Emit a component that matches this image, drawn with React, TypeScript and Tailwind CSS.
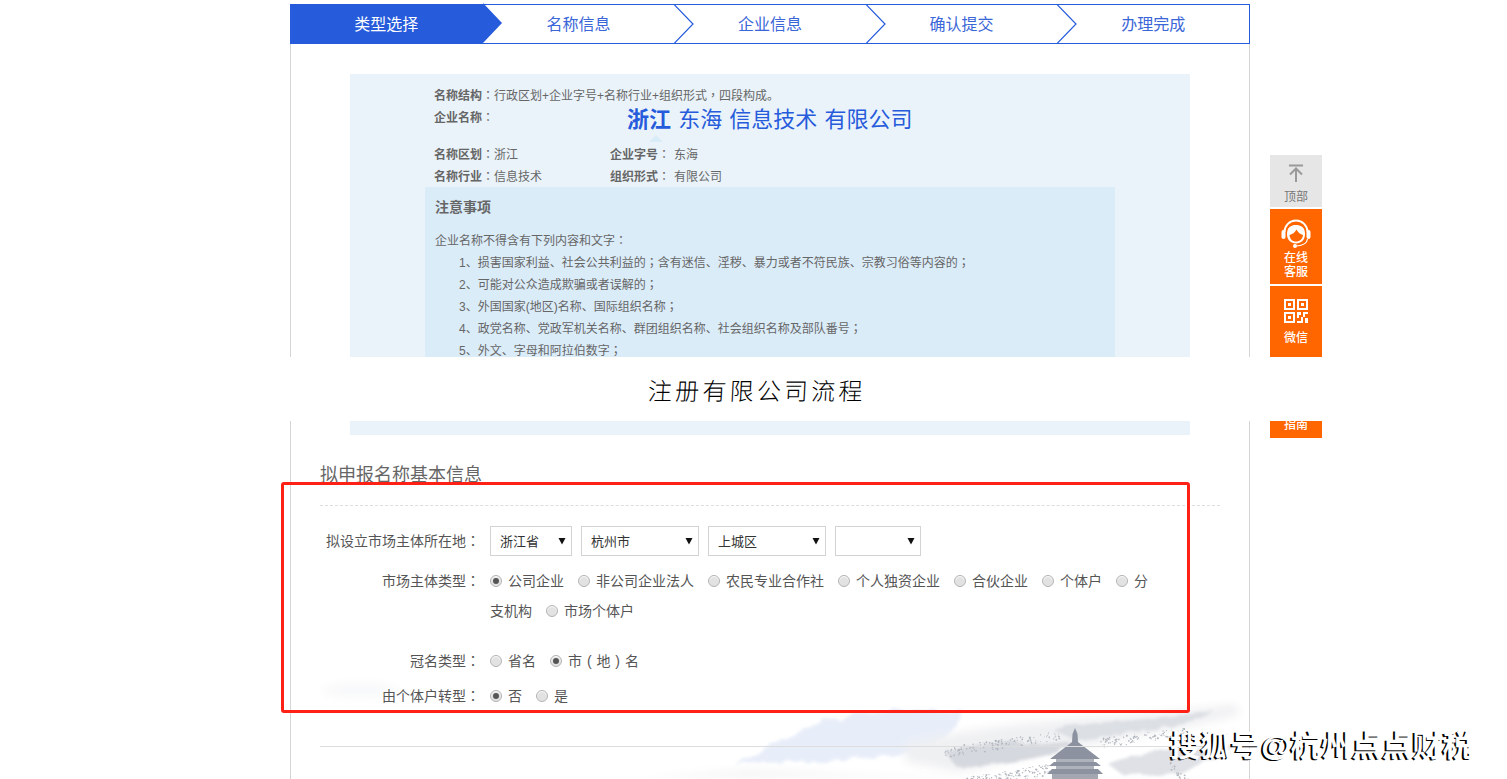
import React from 'react';

const steps = ['类型选择', '名称信息', '企业信息', '确认提交', '办理完成'];

const notes = [
  '1、损害国家利益、社会公共利益的；含有迷信、淫秽、暴力或者不符民族、宗教习俗等内容的；',
  '2、可能对公众造成欺骗或者误解的；',
  '3、外国国家(地区)名称、国际组织名称；',
  '4、政党名称、党政军机关名称、群团组织名称、社会组织名称及部队番号；',
  '5、外文、字母和阿拉伯数字；',
  '6、其他法律、行政法规规定禁止的内容和文字；',
  '7、其他有害内容和文字；',
];

// the reference centres these marks in their cell, the TC font does too
function Marks({ text }: { text: string }) {
  return (
    <>
      {text.split(/([：；，])/).map((part, i) =>
        i % 2 ? (
          <span key={i} className="font-['Noto_Sans_CJK_TC'] leading-none">
            {part}
          </span>
        ) : (
          part
        ),
      )}
    </>
  );
}

function StepBar() {
  return (
    <div className="flex h-10 border border-[#265bdb]">
      {steps.map((step, i) => (
        <div
          key={step}
          className={`relative flex w-[192px] items-center justify-center pt-px text-base ${
            i === 0 ? 'bg-[#265bdb] text-white' : 'text-[#3a66d8]'
          } ${i === 0 ? '-ml-px -my-px w-[193px]' : ''}`}
        >
          {step}
          {i < 4 && (
            <svg className="absolute -right-5 -top-px z-10 h-10 w-5" viewBox="0 0 20 40">
              {i === 0 ? (
                <path d="M0 0L19 20L0 40Z" fill="#265bdb" />
              ) : (
                <>
                  <path d="M0 0.5L19 20L0 39.5Z" fill="#fff" />
                  <path d="M0 0.5L19 20L0 39.5" fill="none" stroke="#265bdb" strokeWidth="1.2" />
                </>
              )}
            </svg>
          )}
        </div>
      ))}
    </div>
  );
}

function NamePanel() {
  return (
    <div className="mx-[30px] h-[361px] overflow-hidden bg-[#eaf3fa] px-[75px] pt-[10px] text-xs leading-[24px] text-[#666]">
      <div className="h-[22px] pl-[9px]">
        <b>名称结构</b>
        <Marks text="：行政区划+企业字号+名称行业+组织形式，四段构成。" />
      </div>
      <div className="flex h-[37px] pl-[9px]">
        <div>
          <b>企业名称</b>
          <Marks text="：" />
        </div>
        <div className="ml-[133px]">
          <div className="whitespace-nowrap text-[22px] leading-[28px] text-[#265bdb] [word-spacing:1px]">
            <b>浙江</b> 东海 信息技术 有限公司
          </div>
          <div className="ml-[22px] mt-px h-0 w-0 border-x-[7px] border-b-[7px] border-x-transparent border-b-[#dbecf9]" />
        </div>
      </div>
      <div className="grid grid-cols-[176px_1fr] grid-rows-[22px_22px] pl-[9px]">
        <div>
          <b>名称区划</b>
          <Marks text="：" />
          浙江
        </div>
        <div>
          <b>企业字号</b>
          <Marks text="：" />
          <span className="ml-1">东海</span>
        </div>
        <div>
          <b>名称行业</b>
          <Marks text="：" />
          信息技术
        </div>
        <div>
          <b>组织形式</b>
          <Marks text="：" />
          <span className="ml-1">有限公司</span>
        </div>
      </div>
      <div className="bg-[#dbecf9] px-[10px] pt-[10px]">
        <div className="h-[22px] text-sm font-bold text-[#666]">注意事项</div>
        <div className="mt-[10px] h-[22px]">
          <Marks text="企业名称不得含有下列内容和文字：" />
        </div>
        {notes.map((n) => (
          <div key={n} className="h-[22px] pl-6">
            <Marks text={n} />
          </div>
        ))}
      </div>
    </div>
  );
}

function Select({ value, width }: { value: string; width: string }) {
  return (
    <div className={`flex h-[30px] items-center justify-between border border-[#d3d3d3] bg-white pl-[9px] pr-[5px] text-[13px] text-[#333] ${width}`}>
      <span className="pt-px">{value}</span>
      <svg className="h-2 w-2" viewBox="0 0 8 8">
        <path d="M0.5 1H7.5L4 7.5Z" fill="#111" />
      </svg>
    </div>
  );
}

function Radio({ checked, label }: { checked?: boolean; label: string }) {
  return (
    <>
      <span className="mr-[6px] -mt-[2px] inline-flex h-3 w-3 items-center justify-center rounded-full border border-[#b4b4b4] bg-[#e2e2e2] align-middle shadow-[inset_0_1px_1px_#fff]">
        {checked && <span className="h-[6px] w-[6px] rounded-full bg-[#555]" />}
      </span>
      <span className="mr-[14px] [word-spacing:1px]">
        <Marks text={label} />
      </span>
    </>
  );
}

function FormRow({ label, className, children }: { label: string; className?: string; children: React.ReactNode }) {
  return (
    <div className={`flex leading-[30px] ${className ?? ''}`}>
      <div className="h-[30px] w-[160px] shrink-0 text-right">
        <Marks text={label + '：'} />
      </div>
      <div className="ml-[10px] w-[665px]">{children}</div>
    </div>
  );
}

function BaseForm() {
  return (
    <div className="mt-[25px] text-sm text-[#555]">
      <h2 className="h-[46px] border-b border-dashed border-[#ddd] text-lg leading-[30px] text-[#666]">拟申报名称基本信息</h2>
      <FormRow label="拟设立市场主体所在地" className="mt-5">
        <div className="flex gap-[9px]">
          <Select value="浙江省" width="w-[82px]" />
          <Select value="杭州市" width="w-[118px]" />
          <Select value="上城区" width="w-[118px]" />
          <Select value="" width="w-[86px]" />
        </div>
      </FormRow>
      <FormRow label="市场主体类型" className="mt-[10px]">
        <Radio checked label="公司企业" />
        <Radio label="非公司企业法人" />
        <Radio label="农民专业合作社" />
        <Radio label="个人独资企业" />
        <Radio label="合伙企业" />
        <Radio label="个体户" />
        <Radio label="分支机构" />
        <Radio label="市场个体户" />
      </FormRow>
      <FormRow label="冠名类型" className="mt-5">
        <Radio label="省名" />
        <Radio checked label="市 ( 地 ) 名" />
      </FormRow>
      <FormRow label="由个体户转型" className="mt-[5px]">
        <Radio checked label="否" />
        <Radio label="是" />
      </FormRow>
      <div className="mt-[35px] border-t border-[#ddd]" />
    </div>
  );
}

function dots(seed: number, n: number, x0: number, y0: number, x1: number, y1: number, h: number) {
  const out: { x: number; y: number; r: number }[] = [];
  let s = seed;
  const rnd = () => {
    s = (s * 9301 + 49297) % 233280;
    return s / 233280;
  };
  for (let i = 0; i < n; i++) {
    const t = rnd();
    out.push({ x: x0 + (x1 - x0) * t, y: y0 + (y1 - y0) * t + rnd() * h, r: 0.4 + rnd() * 0.6 });
  }
  return out;
}

function Landscape() {
  const trees = [
    ...dots(7, 130, 945, 748, 1060, 730, 10),
    ...dots(11, 90, 1100, 738, 1185, 728, 10),
    ...dots(23, 190, 955, 779, 1050, 764, 12),
    ...dots(31, 30, 1170, 762, 1190, 779, 8),
  ];
  return (
    <svg className="absolute bottom-0 left-[291px] h-[119px] w-[958px]" viewBox="291 660 958 119">
      <defs>
        <filter id="wash" x="-20%" y="-60%" width="140%" height="220%">
          <feTurbulence type="fractalNoise" baseFrequency="0.05" numOctaves="3" seed="4" />
          <feDisplacementMap in="SourceGraphic" scale="10" />
          <feGaussianBlur stdDeviation="1.8" />
        </filter>
        <filter id="blur" x="-30%" y="-60%" width="160%" height="220%">
          <feGaussianBlur stdDeviation="5" />
        </filter>
      </defs>
      <ellipse cx="360" cy="690" rx="38" ry="7" fill="#f7f8f9" filter="url(#blur)" />
      <path d="M735 764C770 745 810 722 838 716C880 708 930 708 965 712C950 735 935 745 925 752C890 756 860 757 850 760Z" fill="#e8eef9" filter="url(#wash)" />
      <path d="M822 710L842 722L860 710Z" fill="#fff" filter="url(#wash)" />
      <path d="M640 779L750 768L860 775L1000 779Z" fill="#f6f6f6" filter="url(#blur)" />
      <path d="M905 745C960 728 1050 720 1120 716C1170 712 1210 708 1236 704L1240 714C1200 726 1110 742 1050 752L960 772L905 762Z" fill="#eff0f2" filter="url(#blur)" />
      <path d="M945 752C970 742 1030 740 1078 745C1050 758 1000 764 958 768Z" fill="#d5d8de" filter="url(#wash)" />
      <path d="M1050 728C1100 722 1170 718 1215 711C1190 726 1120 736 1075 740Z" fill="#dcdfe4" filter="url(#wash)" />
      <path d="M1108 764C1135 752 1190 748 1232 745C1218 762 1180 775 1125 776Z" fill="#dfe1e6" filter="url(#wash)" />
      {trees.map((d, i) => (
        <circle key={i} cx={d.x} cy={d.y} r={d.r} fill="#b3b7bf" />
      ))}
      <g fill="#8c92a0">
        <path d="M1075 728L1077.5 734L1078 742L1100 759L1050 759L1072 742L1072.5 734Z" />
        <rect x="1056" y="759" width="38" height="3" fill="#aeb2bb" />
        <path d="M1049 766L1101 766L1096 762L1054 762Z" />
        <rect x="1056" y="766" width="38" height="3" fill="#aeb2bb" />
        <path d="M1047 774L1103 774L1098 769L1052 769Z" />
        <rect x="1052" y="774" width="46" height="5" fill="#a2a7b1" />
      </g>
    </svg>
  );
}

function SideTools() {
  return (
    <div className="absolute left-[1270px] top-[155px] z-20 flex w-[52px] flex-col gap-[2px] text-center text-xs leading-[14px] text-white">
      <div className="flex h-[52px] flex-col items-center bg-[#e6e6e6] pt-[9px] text-[#777]">
        <svg className="h-[18px] w-[18px]" viewBox="0 0 18 18" fill="none" stroke="#999" strokeWidth="2">
          <path d="M2 1.5H16M9 18V5M3 10.5L9 4.5L15 10.5" />
        </svg>
        <span className="mt-[8px]">顶部</span>
      </div>
      <div className="flex h-[75px] flex-col items-center bg-[#ff6600] pt-[10px] font-medium">
        <svg className="h-[30px] w-[30px]" viewBox="0 0 30 30" fill="none">
          <path d="M3.5 13A11.5 11.5 0 0 1 26.5 13" stroke="#fff" strokeWidth="2" />
          <rect x="0.5" y="11" width="4" height="9" rx="2" fill="#fff" />
          <rect x="25.5" y="11" width="4" height="9" rx="2" fill="#fff" />
          <path d="M6 15C6 8.5 10 6 15 6C20 6 24 8.5 24 15C24 21 20 24.5 15 24.5C10 24.5 6 21 6 15Z" fill="#fff" />
          <path d="M8.5 16C11 15.5 14 13.5 15.5 10.5C17 13.5 19.5 15.5 22 16C21.5 20 19 22.5 15 22.5C11 22.5 9 20 8.5 16Z" fill="#ff6600" />
          <path d="M26.5 20C26 24.5 22 26.5 15.5 27" stroke="#fff" strokeWidth="1.2" />
          <circle cx="14" cy="27" r="2" fill="#fff" />
        </svg>
        <span className="mt-[2px]">在线</span>
        <span>客服</span>
      </div>
      <div className="flex h-[75px] flex-col items-center bg-[#ff6600] pt-[13px] font-medium">
        <svg className="h-6 w-6" viewBox="0 0 24 24" fill="#fff">
          <path fillRule="evenodd" d="M0 0H11V11H0ZM2 2V9H9V2ZM13 0H24V11H13ZM15 2V9H22V2ZM0 13H11V24H0ZM2 15V22H9V15Z" />
          <path d="M4 4H7V7H4ZM17 4H20V7H17ZM4 17H7V20H4ZM13 13H17V16H15V19H13ZM19 13H24V15H21V18H19ZM17 18H19V24H13V22H17ZM21 19H24V24H21Z" />
        </svg>
        <span className="mt-[8px]">微信</span>
      </div>
      <div className="flex h-[75px] flex-col items-center bg-[#ff6600] pt-[41px] font-medium">
        <span>办事</span>
        <span>指南</span>
      </div>
    </div>
  );
}

export default function App() {
  return (
    <div className="relative h-[779px] overflow-hidden bg-white font-['Liberation_Sans','Noto_Sans_CJK_SC',sans-serif]">
      <Landscape />
      <div className="relative ml-[290px] flex h-full w-[960px] flex-col pt-1">
        <StepBar />
        <div className="flex-1 border-x border-[#d5d5d5] px-[29px] pt-[30px]">
          <NamePanel />
          <BaseForm />
        </div>
      </div>
      <SideTools />
      {/* white strip and red frame lie over the page */}
      <div className="absolute inset-x-0 top-[357px] z-30 flex h-16 items-center bg-white pl-[648px] pt-[6px]">
        <span className="-skew-x-3 whitespace-nowrap text-2xl font-light tracking-[3.2px] text-black">注册有限公司流程</span>
      </div>
      <div className="absolute left-[281px] top-[482px] z-30 h-[231px] w-[909px] rounded-[3px] border-[3px] border-[#ff2116]" />
      <div className="absolute left-[1170px] top-[726px] z-30 whitespace-nowrap text-[30px] font-bold leading-10 tracking-[0.4px] text-white [text-shadow:-2px_1px_0_#000]">
        搜狐号@杭州点点财税
      </div>
    </div>
  );
}
